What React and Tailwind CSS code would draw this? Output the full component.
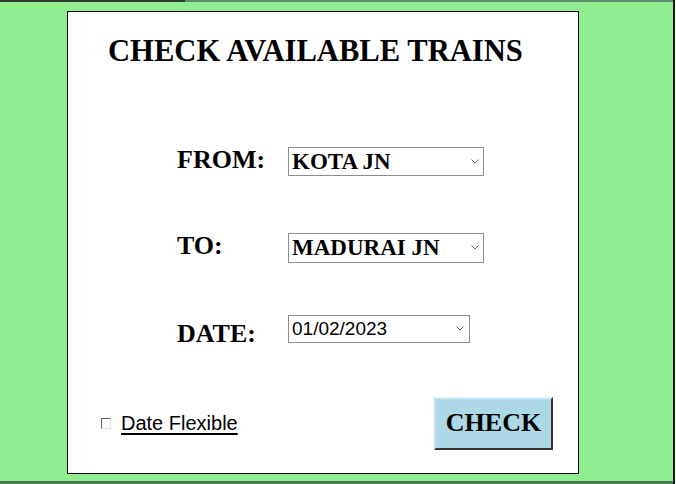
import React from "react";

function Chevron() {
  return (
    <svg width="8" height="5" viewBox="0 0 8 5" className="shrink-0">
      <polyline points="0.5,0.5 4,4 7.5,0.5" fill="none" stroke="#6b6b6b" strokeWidth="1" />
    </svg>
  );
}

function FakeSelect({ value, width, height, serif, gapRight }) {
  return (
    <div
      className={`flex items-center justify-between border border-[#8c8c8c] bg-white pl-[3px] ${width} ${height} ${gapRight}`}
    >
      <span
        className={
          serif
            ? "font-['Liberation_Serif',serif] text-[23px] font-bold leading-none text-black"
            : "font-['Liberation_Sans',Arial,sans-serif] text-[19px] leading-none text-black"
        }
      >
        {value}
      </span>
      <Chevron />
    </div>
  );
}

export default function App() {
  const label = "w-[111px] shrink-0 font-['Liberation_Serif',serif] text-[26px] font-bold leading-none text-black";
  return (
    <div className="flex h-[484px] w-[676px] flex-row overflow-hidden bg-[#90ee90]">
      <div className="flex flex-1 flex-col">
        <div className="flex h-[2px] flex-row">
          <div className="w-[185px] bg-[#2f3a33]" />
          <div className="flex-1 bg-[#5f8a6f]" />
        </div>
        <div className="flex-1 pl-[67px] pt-[9px]">
          <div className="flex h-[463px] w-[512px] flex-col border border-black bg-white">
            <div className="mt-[24px] pl-[40px] font-['Liberation_Serif',serif] text-[30.6px] font-bold leading-none text-black">
              CHECK AVAILABLE TRAINS
            </div>

            <div className="mt-[80px] flex flex-row items-start pl-[109px]">
              <div className={label}>FROM:</div>
              <FakeSelect value="KOTA JN" width="w-[196px]" height="h-[29px]" serif gapRight="pr-[4px]" />
            </div>

            <div className="mt-[57px] flex flex-row items-start pl-[109px]">
              <div className={label}>TO:</div>
              <FakeSelect value="MADURAI JN" width="w-[196px]" height="h-[30px]" serif gapRight="pr-[4px]" />
            </div>

            <div className="mt-[52px] flex flex-row items-start pl-[109px]">
              <div className={`${label} mt-[6px]`}>DATE:</div>
              <FakeSelect value="01/02/2023" width="w-[182px]" height="h-[28px]" gapRight="pr-[5px]" />
            </div>

            <div className="mt-[50px] flex flex-row items-center justify-between pl-[33px] pr-[25px]">
              <div className="flex flex-row items-center gap-[10px]">
                <div className="h-[11px] w-[10px] border border-t-[#666666] border-l-[#666666] border-b-[#e2e2e2] border-r-[#e2e2e2] bg-white" />
                <span className="font-['Liberation_Sans',Arial,sans-serif] text-[20px] leading-none text-black underline underline-offset-[3px]">
                  Date Flexible
                </span>
              </div>
              <div className="flex h-[53px] w-[119px] items-center justify-center border-2 border-t-[#d6eef5] border-l-[#c4e2ec] border-b-[#333333] border-r-[#333333] bg-[#add8e6] font-['Liberation_Serif',serif] text-[26px] font-bold leading-none text-black">
                CHECK
              </div>
            </div>
          </div>
        </div>
        <div className="h-[3px] bg-[#4d7a58]" />
      </div>
      <div className="w-[2px] bg-[#1a1a1a]" />
      <div className="w-[1px] bg-white" />
    </div>
  );
}
